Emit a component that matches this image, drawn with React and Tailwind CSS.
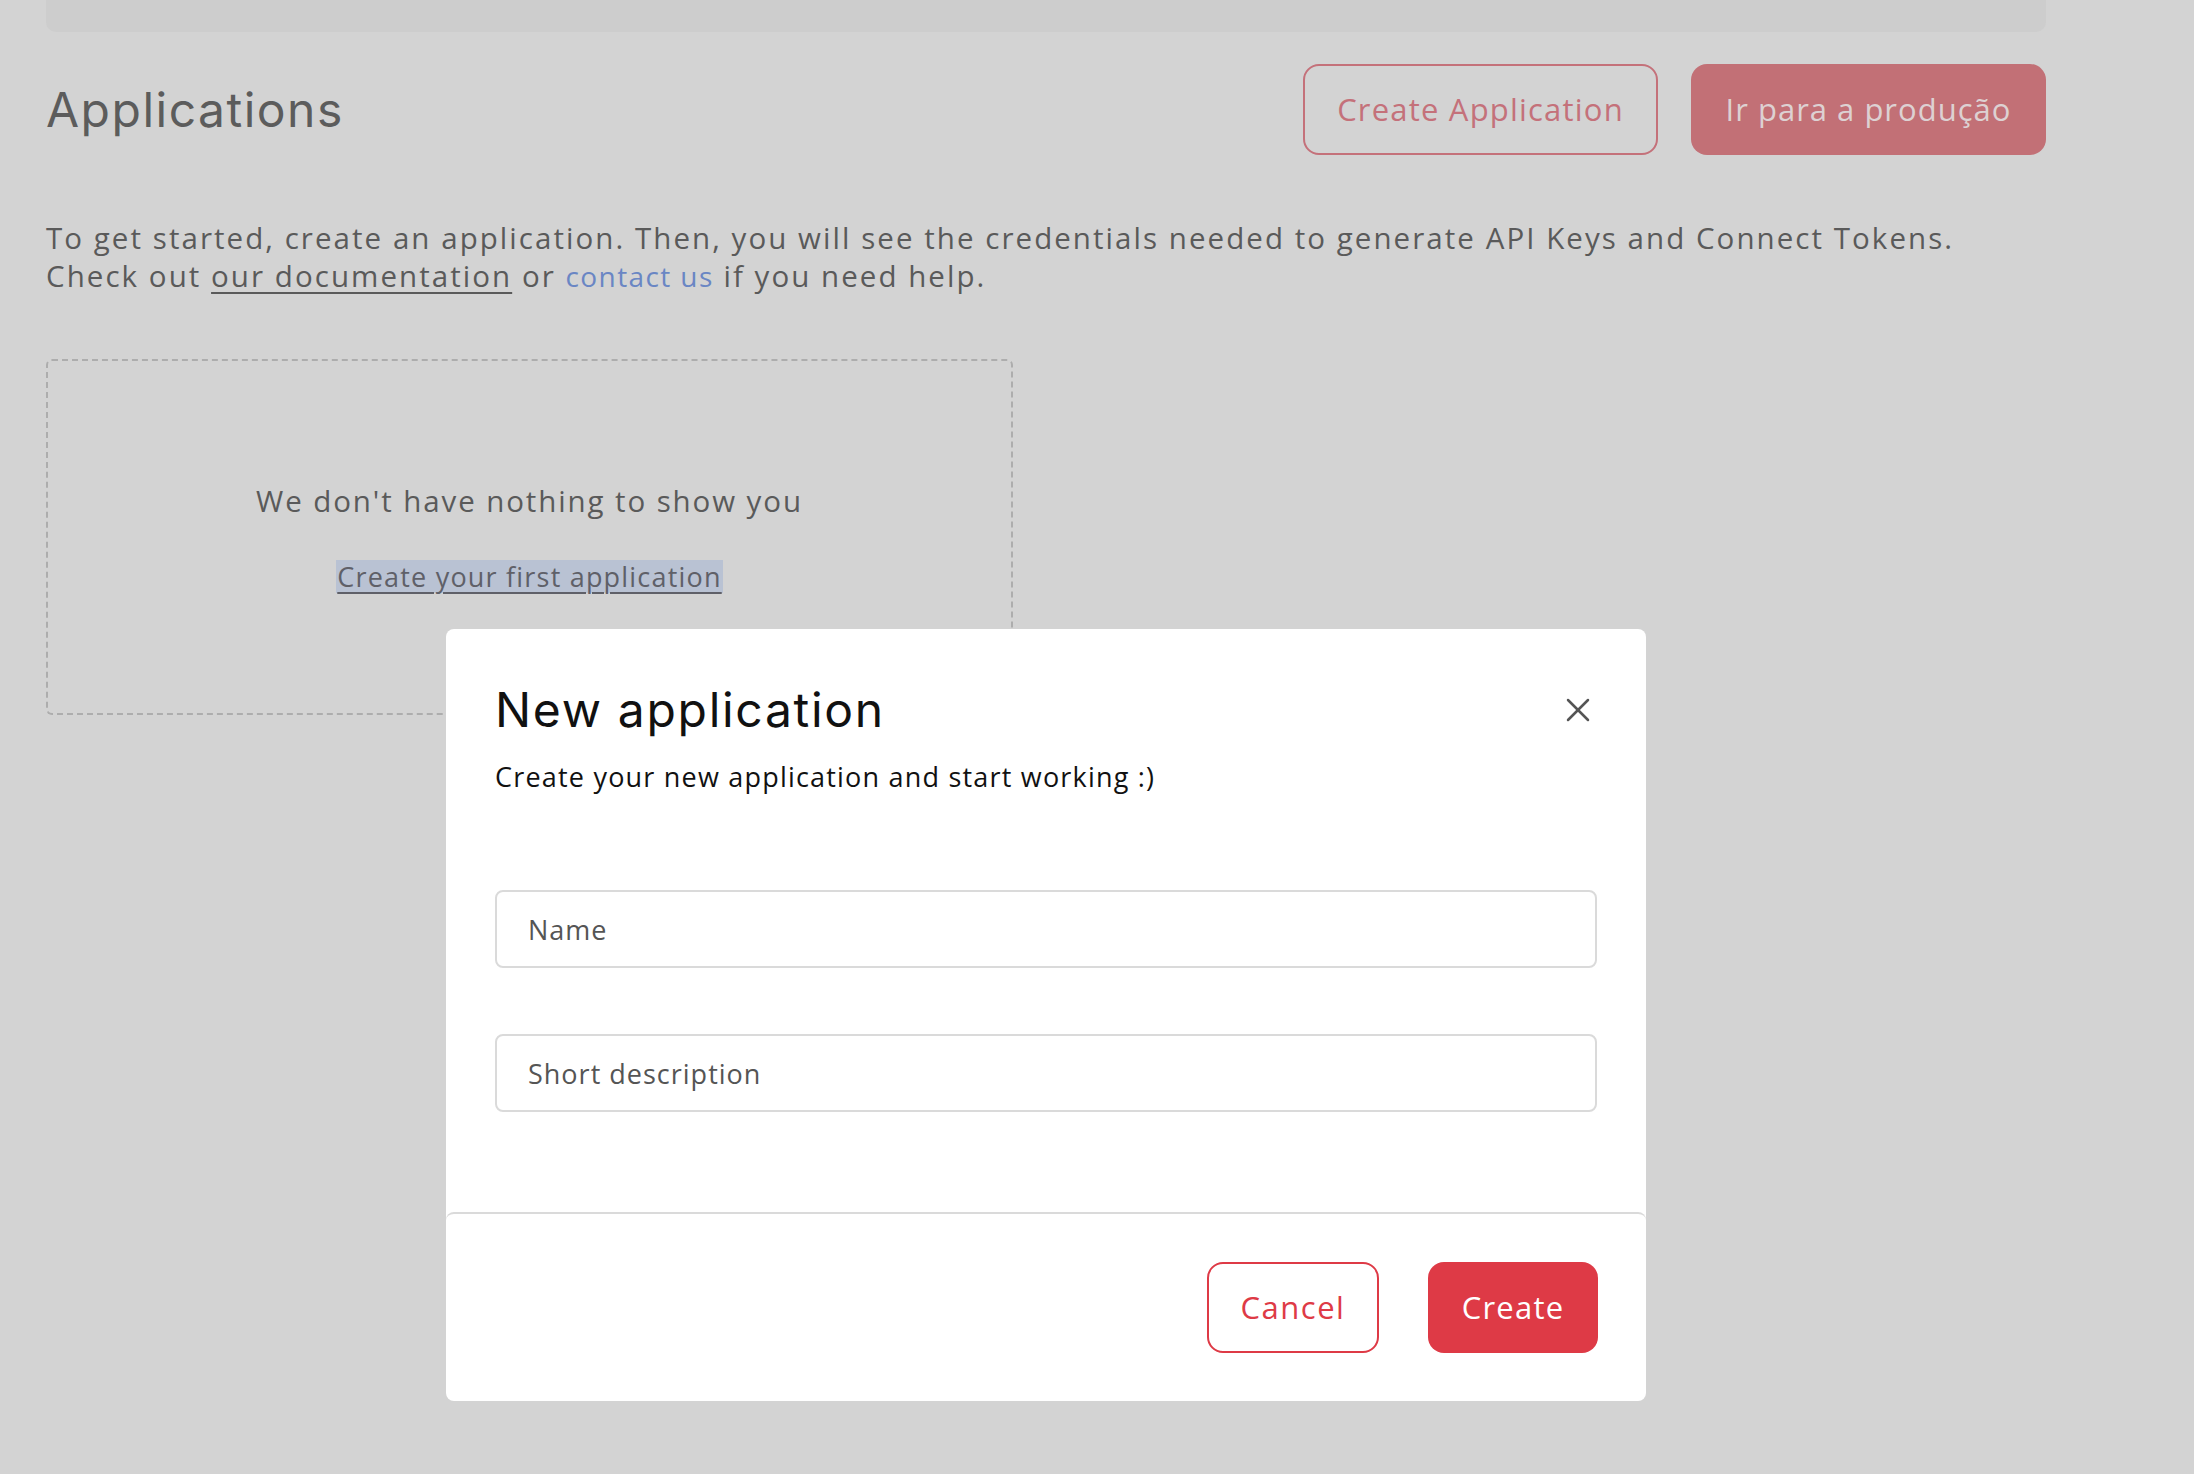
import { X } from 'lucide-react';

const heading = { fontFamily: 'Inter, "Noto Sans", sans-serif' };

export default function App() {
  return (
    <div className="relative w-full h-[1474px] overflow-hidden bg-[#d3d3d3] text-[#5a5a5a]" style={{ fontFamily: '"Open Sans", "Noto Sans", sans-serif' }}>
      <div className="ml-[46px] w-[2000px]">
        <div className="h-[32px] bg-[#cdcdcd] rounded-b-[10px]" />

        <div className="mt-[32px] flex items-center justify-between h-[91px]">
          <h1 className="text-[48px] font-normal leading-none tracking-[1.5px] text-[#5c5c5c]" style={heading}>Applications</h1>
          <div className="flex gap-[33px]">
            <button className="h-[91px] w-[355px] rounded-[16px] border-2 border-[#c4717a] text-[31px] tracking-[1.2px] text-[#c4717a]">
              Create Application
            </button>
            <button className="h-[91px] w-[355px] rounded-[16px] bg-[#c27076] text-[31px] tracking-[1px] text-[#ddd1d2]">
              Ir para a produção
            </button>
          </div>
        </div>

        <p className="mt-[64px] text-[29.5px] leading-[38px] tracking-[2.05px] text-[#5a5a5a]">
          To get started, create an application. Then, you will see the credentials needed to generate API Keys and Connect Tokens.
          <br />
          Check out <a className="underline underline-offset-[5px] decoration-2">our documentation</a> or{' '}
          <a className="text-[#6a86c4] text-[28px] tracking-[1.4px]">contact us</a> if you need help.
        </p>

        <div className="mt-[64px] w-[967px] h-[356px] rounded-[6px] border-2 border-dashed border-[#adadad] flex flex-col items-center justify-center gap-[40px]">
          <p className="text-[29.5px] leading-[38px] tracking-[1.9px]">We don't have nothing to show you</p>
          <a className="bg-[#b9c2d3] px-[1px] text-[27px] leading-[33px] tracking-[1.2px] text-[#5f6068] underline underline-offset-[5px] decoration-2">
            Create your first application
          </a>
        </div>
      </div>

      <div className="absolute left-[446px] top-[629px] w-[1200px] h-[772px] rounded-[8px] bg-white flex flex-col">
        <div className="flex-1 px-[49px] pt-[51px]">
          <div className="flex items-start justify-between">
            <h2 className="text-[48px] leading-[60px] font-normal tracking-[1.7px] text-[#111]" style={heading}>New application</h2>
            <button className="mt-[10px] mr-[-1px] text-[#555]">
              <X size={40} strokeWidth={1.5} />
            </button>
          </div>
          <p className="mt-[19px] text-[27px] leading-[36px] tracking-[1.2px] text-[#111]">Create your new application and start working :)</p>

          <div className="mt-[95px] flex flex-col gap-[66px]">
            <input
              placeholder="Name"
              className="h-[78px] w-full rounded-[8px] border-2 border-[#dadada] px-[31px] text-[27px] tracking-[1px] placeholder:text-[#555] outline-none"
            />
            <input
              placeholder="Short description"
              className="h-[78px] w-full rounded-[8px] border-2 border-[#dadada] px-[31px] text-[27px] tracking-[1px] placeholder:text-[#555] outline-none"
            />
          </div>
        </div>

        <div className="h-[189px] rounded-[8px] border-t-2 border-[#dadada] flex items-center justify-end gap-[49px] px-[48px]">
          <button className="h-[91px] w-[172px] rounded-[16px] border-2 border-[#de3a46] text-[31px] tracking-[1.5px] text-[#de3a46]">
            Cancel
          </button>
          <button className="h-[91px] w-[170px] rounded-[16px] bg-[#de3a46] text-[31px] tracking-[1.2px] text-white">
            Create
          </button>
        </div>
      </div>
    </div>
  );
}
